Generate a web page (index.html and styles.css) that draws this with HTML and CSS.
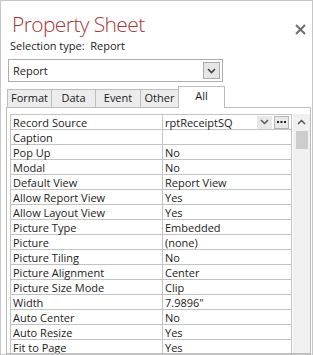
FILE: index.html
```html
<!DOCTYPE html>
<html lang="en">
<head>
  <meta charset="UTF-8"/>
  <title>Property Sheet</title>
  <link rel="stylesheet" href="styles.css">
</head>
<body>
<div class="sheet">
  <div class="head">
    <h1 class="title">Property Sheet</h1>
    <span class="close">
      <svg width="11" height="11" viewBox="0 0 11 11"><path d="M1 1L10 10M10 1L1 10" stroke="#6e6e6e" stroke-width="2"/></svg>
    </span>
  </div>
  <div class="sel">Selection type:&nbsp; Report</div>
  <div class="combo">
    <span class="combo-text">Report</span>
    <span class="combo-btn">
      <svg width="9" height="6" viewBox="0 0 9 6"><path d="M1 1L4.5 4.5L8 1" stroke="#444" stroke-width="1.6" fill="none"/></svg>
    </span>
  </div>
  <div class="tabs">
    <span class="tab t-format">Format</span>
    <span class="tab t-data">Data</span>
    <span class="tab t-event">Event</span>
    <span class="tab t-other">Other</span>
    <span class="tab active">All</span>
  </div>
  <div class="panel">
    <div class="grid">
      <table class="props">
        <tr>
          <td class="lbl">Record Source</td>
          <td class="val">
            <div class="src">
              <span>rptReceiptSQ</span>
              <span class="mini drop"><svg width="9" height="6" viewBox="0 0 9 6"><path d="M1 1L4.5 4.5L8 1" stroke="#555" stroke-width="1.5" fill="none"/></svg></span>
              <span class="mini dots"><svg width="9" height="2" viewBox="0 0 9 2"><path d="M0 0h2v2H0zM3.5 0h2v2h-2zM7 0h2v2H7z" fill="#222"/></svg></span>
            </div>
          </td>
        </tr>
        <tr><td class="lbl">Caption</td><td class="val"></td></tr>
        <tr><td class="lbl">Pop Up</td><td class="val">No</td></tr>
        <tr><td class="lbl">Modal</td><td class="val">No</td></tr>
        <tr><td class="lbl">Default View</td><td class="val">Report View</td></tr>
        <tr><td class="lbl">Allow Report View</td><td class="val">Yes</td></tr>
        <tr><td class="lbl">Allow Layout View</td><td class="val">Yes</td></tr>
        <tr><td class="lbl">Picture Type</td><td class="val">Embedded</td></tr>
        <tr><td class="lbl">Picture</td><td class="val">(none)</td></tr>
        <tr><td class="lbl">Picture Tiling</td><td class="val">No</td></tr>
        <tr><td class="lbl">Picture Alignment</td><td class="val">Center</td></tr>
        <tr><td class="lbl">Picture Size Mode</td><td class="val">Clip</td></tr>
        <tr><td class="lbl">Width</td><td class="val">7.9896"</td></tr>
        <tr><td class="lbl">Auto Center</td><td class="val">No</td></tr>
        <tr><td class="lbl">Auto Resize</td><td class="val">Yes</td></tr>
        <tr><td class="lbl">Fit to Page</td><td class="val">Yes</td></tr>
      </table>
      <div class="scroll">
        <span class="up"><svg width="9" height="6" viewBox="0 0 9 6"><path d="M1 5L4.5 1.5L8 5" stroke="#555" stroke-width="1.5" fill="none"/></svg></span>
        <span class="thumb"></span>
      </div>
    </div>
  </div>
</div>
</body>
</html>
```
FILE: styles.css
```css
* { box-sizing: border-box; margin:0; padding:0; }
body { font-family: "Open Sans", "Noto Sans", sans-serif; background:#fff; color:#1b1b1b; }
.sheet { width:313px; height:355px; border:1px solid #c6c6c6; overflow:hidden; background:#fff; }

.head { display:flex; justify-content:space-between; padding:11px 6px 0 11px; height:36px; }
.title { font-weight:300; font-size:21px; line-height:24px; color:#a4373a; letter-spacing:-0.6px; }
.close { padding-top:6px; }

.sel { font-size:11px; line-height:14px; padding-left:9px; margin-top:2px; }

.combo { display:flex; justify-content:space-between; align-items:center; margin:6px 0 0 7px; width:215px; height:23px; border:1px solid #adadad; padding:0 2px 0 4px; font-size:11px; }
.combo-btn { display:flex; align-items:center; justify-content:center; width:17px; height:17px; background:#e6e6e6; border:1px solid #acacac; }

.tabs { display:flex; align-items:flex-end; margin:3px 0 0 6px; height:22px; font-size:11px; }
.tab { height:18px; line-height:16px; border:1px solid #bdbdbd; border-bottom:none; background:#ececec; text-align:center; margin-right:-1px; }
.t-format { width:45px; }
.t-data { width:45px; }
.t-event { width:46px; }
.t-other { width:39px; }
.tab.active { height:22px; width:47px; background:#fff; position:relative; top:1px; line-height:18px; z-index:1; }

.panel { margin-left:5px; width:305px; height:247px; border:1px solid #bdbdbd; padding:6px 0 0 3px; overflow:hidden; }
.grid { display:flex; }
.props { border-collapse:collapse; width:283px; font-size:11px; }
.props td { border:1px solid #c3c3c3; height:15px; line-height:13px; padding:0 2px; white-space:nowrap; }
.lbl { width:152px; }
.src { display:flex; align-items:center; }
.src span:first-child { flex:1; }
.mini { display:flex; align-items:center; justify-content:center; height:13px; background:#e8e8e8; }
.drop { width:15px; margin-right:2px; }
.dots { width:15px; border:1px solid #b5b5b5; }

.scroll { width:17px; height:240px; margin-left:1px; background:#f0f0f0; display:flex; flex-direction:column; align-items:center; }
.up { height:16px; display:flex; align-items:center; }
.thumb { width:12px; height:18px; margin-top:1px; background:#cdcdcd; }
```
